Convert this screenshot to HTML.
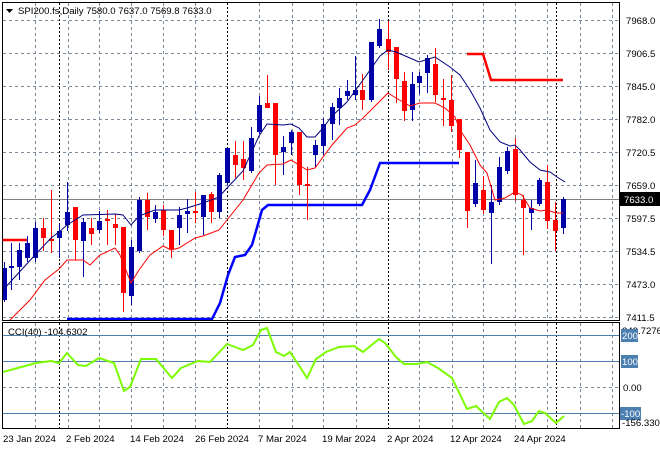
<!DOCTYPE html>
<html><head><meta charset="utf-8"><style>
html,body{margin:0;padding:0;background:#fff}
svg{display:block;font-family:"Liberation Sans",sans-serif;font-size:9.6px}
</style></head><body>
<svg id="s" width="660" height="450" xmlns="http://www.w3.org/2000/svg">
<rect width="660" height="450" fill="#fff"/>
<g id="grid" stroke="#7d8a99" stroke-width="1" stroke-dasharray="3,3" fill="none"></g>
<g id="dot" stroke="#000" stroke-width="1" stroke-dasharray="2,2" fill="none"></g>
<line x1="3" y1="199.5" x2="619" y2="199.5" stroke="#808080"/>
<polyline fill="none" stroke="#0000ff" stroke-width="2.5" points="67,319 212,319 220,303 228,275 235,257 245,255 252,245 262,210 268,205 362,205 370,190 380,163 459,163"/>
<polyline fill="none" stroke="#ff0000" stroke-width="2.5" points="3,240 27,240"/>
<polyline fill="none" stroke="#ff0000" stroke-width="2.5" points="467,54 483,54 491,80 563,80"/>
<g id="candles"></g>
<polyline fill="none" stroke="#000080" stroke-width="1" points="3,290 35,255 51,238 59,232 67,225 83,215 115,214 123,215 131,225 139,216 155,210 179,210 187,208 203,203 219,197 227,188 243,171 259,136 267,124 283,125 291,124 299,128 307,137 315,137 323,128 332,116 347,102 363,80 380,56 388,50 396,52 410,58 419,62 435,57 450,67 460,75 470,90 480,108 490,130 500,142 510,146 515,145 520,150 530,162 540,170 550,172 557,177 565,182"/>
<polyline fill="none" stroke="#ff0000" stroke-width="1" points="10,320 30,300 45,280 59,269 67,260 83,260 90,265 100,255 115,248 120,255 131,283 139,270 150,255 163,246 171,250 179,248 195,238 203,236 219,230 227,220 243,200 259,173 267,165 283,164 291,160 307,170 315,168 323,157 332,145 347,128 355,125 363,118 380,101 388,93 396,98 410,106 420,103 435,103 445,108 455,117 460,130 470,145 480,165 487,173 495,200 505,198 515,192 522,195 530,208 540,211 547,210 556,213 563,213"/>
<rect x="2.5" y="2.5" width="617" height="318" fill="none" stroke="#000"/>
<rect x="2.5" y="322.5" width="617" height="106" fill="none" stroke="#000"/>
<g stroke="#4a7fb0" stroke-width="1">
<line x1="3" y1="335.5" x2="619" y2="335.5"/>
<line x1="3" y1="361.5" x2="619" y2="361.5"/>
<line x1="3" y1="413.5" x2="619" y2="413.5"/>
</g>
<line x1="3" y1="387.5" x2="619" y2="387.5" stroke="#7d8a99" stroke-dasharray="3,3"/>
<polyline fill="none" stroke="#7cfc00" stroke-width="2" points="3,372 36,363 51,361 59,363 67,353 78,365 86,366 99,358 114,363 124,391 130,387 141,359 156,359 172,378 181,368 198,361 210,362 227,344 243,350 253,345 261,330 267,328 276,352 284,356 290,352 300,367 307,378 316,359 326,352 339,347 354,346 363,352 379,339 385,343 396,357 404,364 417,364 427,362 438,368 452,378 467,409 476,406 490,419 499,402 507,398 514,405 524,424 532,421 539,411 545,413 556,423 564,416"/>
<path d="M6,9 L13,9 L9.5,13 Z" fill="#000"/>
<text x="18" y="14" fill="#000">SPI200.fs,Daily  7580.0 7637.0 7569.8 7633.0</text>
<text x="8" y="335" fill="#000">CCI(40) -104.6302</text>
<g fill="#000" id="ra"></g>
<rect x="620" y="192" width="40" height="14" fill="#000"/>
<text x="624" y="203" fill="#fff">7633.0</text>
<text x="622" y="334" fill="#000">242.7276</text>
<rect x="621" y="329" width="17" height="13" fill="#4a7fb0"/><text x="622" y="339" fill="#fff">200</text>
<rect x="621" y="355" width="17" height="13" fill="#4a7fb0"/><text x="622" y="365" fill="#fff">100</text>
<text x="623" y="391" fill="#000">0.00</text>
<rect x="620" y="407" width="21" height="13" fill="#4a7fb0"/><text x="621" y="417" fill="#fff">-100</text>
<text x="622" y="426" fill="#000">-156.330</text>
<g fill="#000">
<text x="3" y="442">23 Jan 2024</text>
<text x="66" y="442">2 Feb 2024</text>
<text x="130" y="442">14 Feb 2024</text>
<text x="195" y="442">26 Feb 2024</text>
<text x="258" y="442">7 Mar 2024</text>
<text x="322" y="442">19 Mar 2024</text>
<text x="387" y="442">2 Apr 2024</text>
<text x="450" y="442">12 Apr 2024</text>
<text x="514" y="442">24 Apr 2024</text>
</g>
</svg>
<script>
var NS="http://www.w3.org/2000/svg";
function el(p,t,a){var e=document.createElementNS(NS,t);for(var k in a)e.setAttribute(k,a[k]);p.appendChild(e);return e;}
var g=document.getElementById('grid'),d=document.getElementById('dot');
var vx=[35,68,99,131,163,195,259,292,323,356,419,452,483,515,547,580,612];
vx.forEach(function(x){el(g,'line',{x1:x+.5,y1:3,x2:x+.5,y2:320});el(g,'line',{x1:x+.5,y1:323,x2:x+.5,y2:428});});
[20,53,86,119,152,185,218,251,284,317].forEach(function(y){el(g,'line',{x1:3,y1:y+.5,x2:619,y2:y+.5});});
[59,227,388,556].forEach(function(x){el(d,'line',{x1:x+.5,y1:3,x2:x+.5,y2:320});el(d,'line',{x1:x+.5,y1:323,x2:x+.5,y2:428});});
var ra=document.getElementById('ra');
var lab=["7968.0","7906.5","7845.0","7782.0","7720.5","7659.0","","7534.5","7473.0","7411.5"];
var ly=[20,53,86,119,152,185,218,251,284,317];
lab.forEach(function(t,i){if(t){var e=el(ra,'text',{x:626,y:ly[i]+4});e.textContent=t;}});
var ra2=el(ra,'text',{x:626,y:222});ra2.textContent="7597.5";
var C=[[4,'b',268,300,262,302],[11,'b',266,268,243,290],[19,'b',250,267,243,280],[27,'b',243,258,236,262],[35,'b',228,258,222,262],[43,'r',228,238,218,251],[51,'r',239,241,190,253],[59,'b',231,238,223,258],[67,'b',212,225,182,231],[75,'r',207,240,207,260],[83,'b',222,241,218,277],[91,'r',228,234,218,245],[99,'b',221,230,211,233],[107,'r',219,221,210,245],[115,'r',224,228,214,245],[123,'r',227,293,227,312],[131,'b',247,296,240,305],[139,'b',200,251,197,253],[147,'r',200,217,193,230],[155,'b',212,219,205,223],[163,'r',210,230,205,236],[171,'r',230,249,230,258],[179,'b',215,228,207,245],[187,'b',211,214,199,233],[195,'r',211,213,192,223],[203,'b',195,217,195,235],[211,'r',194,212,192,223],[219,'b',175,212,173,218],[227,'b',148,183,148,185],[235,'r',155,165,141,178],[243,'r',159,168,141,180],[251,'b',138,171,127,173],[259,'b',105,132,96,134],[267,'r',103,108,75,108],[275,'r',103,155,103,185],[283,'b',147,152,136,175],[291,'b',132,143,130,155],[299,'r',132,185,132,195],[307,'r',184,186,167,220],[315,'b',145,155,140,167],[323,'b',124,146,118,155],[332,'b',107,124,103,140],[339,'b',98,108,88,125],[347,'b',91,96,80,100],[355,'b',90,95,56,100],[362,'r',90,100,74,110],[371,'b',42,100,42,102],[379,'b',29,46,19,48],[388,'r',39,52,21,70],[396,'r',47,79,47,103],[404,'r',81,111,72,121],[412,'b',84,110,72,121],[419,'b',76,83,72,94],[427,'b',58,73,55,93],[435,'r',64,95,48,102],[443,'r',98,100,79,126],[451,'r',100,126,75,132],[459,'r',119,150,119,158],[467,'r',152,211,152,228],[475,'b',183,204,160,207],[483,'r',190,210,176,214],[491,'b',202,213,185,264],[499,'b',167,202,157,205],[507,'b',151,171,147,174],[515,'r',149,195,138,201],[523,'r',200,208,195,255],[531,'b',208,213,200,230],[539,'b',180,204,178,206],[547,'r',182,221,165,229],[555,'r',220,231,202,251],[563,'b',199,228,197,234]];
var cg=document.getElementById('candles');
C.forEach(function(c){var col=c[1]=='b'?'#0000a8':'#ff0000';
el(cg,'rect',{x:c[0],y:c[4],width:1,height:c[5]-c[4],fill:col});
el(cg,'rect',{x:c[0]-2,y:c[2],width:5,height:Math.max(2,c[3]-c[2]),fill:col});});
</script>
</body></html>
